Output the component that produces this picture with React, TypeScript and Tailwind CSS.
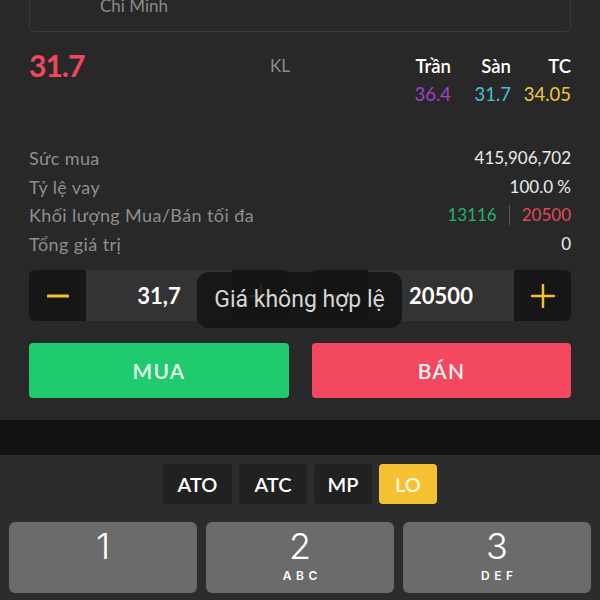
import React from 'react';

const rows = [
  { label: 'Sức mua', value: '415,906,702' },
  { label: 'Tỷ lệ vay', value: '100.0 %' },
  { label: 'Khối lượng Mua/Bán tối đa', value: null },
  { label: 'Tổng giá trị', value: '0' },
];

const Minus = () => (
  <svg width="22" height="6" viewBox="0 0 22 6">
    <line x1="1" y1="3" x2="21" y2="3" stroke="#f2c12e" strokeWidth="3" strokeLinecap="round" />
  </svg>
);

const Plus = () => (
  <svg width="24" height="24" viewBox="0 0 24 24">
    <line x1="1" y1="12" x2="23" y2="12" stroke="#f2c12e" strokeWidth="2.5" strokeLinecap="round" />
    <line x1="12" y1="1" x2="12" y2="23" stroke="#f2c12e" strokeWidth="2.5" strokeLinecap="round" />
  </svg>
);

const Stepper = ({ value }: { value: string }) => (
  <div className="flex w-[260px] rounded-[6px] overflow-hidden">
    <div className="w-[57px] bg-[#161616] flex items-center justify-center">
      <Minus />
    </div>
    <div className="flex-1 bg-[#333333] flex items-center justify-center text-[22px] font-bold text-white">
      {value}
    </div>
    <div className="w-[57px] bg-[#161616] flex items-center justify-center">
      <Plus />
    </div>
  </div>
);

const orderTypes = [
  { t: 'ATO', w: 'w-[69px]' },
  { t: 'ATC', w: 'w-[68px]' },
  { t: 'MP', w: 'w-[58px]' },
  { t: 'LO', w: 'w-[58px]' },
];

const keys = [
  { n: '1', sub: '' },
  { n: '2', sub: 'ABC' },
  { n: '3', sub: 'DEF' },
];

export default function App() {
  return (
    <div className="w-[600px] h-[600px] overflow-hidden bg-[#282828] flex flex-col font-['Lato','Noto_Sans',sans-serif]">
      <div className="px-[29px]">
        {/* top card (cut off) */}
        <div className="h-[32px] border border-t-0 border-[#3a3a3a] rounded-b-[6px] overflow-hidden">
          <div className="pl-[70px] -mt-[4px] text-[17px] leading-[20px] text-[#8a8a8a]">Chi Minh</div>
        </div>

        {/* price row */}
        <div className="flex items-start mt-[15px]">
          <div className="w-[241px] text-[30px] leading-[36px] font-bold text-[#f0485e] tracking-[-1px]">31.7</div>
          <div className="mt-[5px] text-[17px] leading-[28px] text-[#8b8b8b]">KL</div>
          <div className="ml-auto mt-[5px] grid grid-cols-[60px_60px_60px] text-right text-[18.5px] leading-[28px]">
            <span className="font-semibold text-white">Trần</span>
            <span className="font-semibold text-white">Sàn</span>
            <span className="font-semibold text-white">TC</span>
            <span className="text-[#a341cc]">36.4</span>
            <span className="text-[#3fc3d6]">31.7</span>
            <span className="text-[#f0c63a]">34.05</span>
          </div>
        </div>

        {/* info rows */}
        <div className="mt-[36px] flex flex-col text-[17px] leading-[28.5px]">
          {rows.map((r) => (
            <div key={r.label} className="flex justify-between">
              <span className="text-[#8f8f8f] text-[18px] tracking-[0.4px]">{r.label}</span>
              {r.value !== null ? (
                <span className="text-[#ececec]">{r.value}</span>
              ) : (
                <span className="flex items-center">
                  <span className="text-[#22b46c]">13116</span>
                  <span className="mx-[12px] w-px h-[20px] bg-[#5a5a5a]" />
                  <span className="text-[#e2475c]">20500</span>
                </span>
              )}
            </div>
          ))}
        </div>

        {/* steppers */}
        <div className="relative mt-[12px] h-[51px] flex justify-between">
          <Stepper value="31,7" />
          <Stepper value="20500" />
          <div className="absolute left-[168px] top-[2px] w-[205px] h-[56px] rounded-[12px] bg-[#141414]/90 flex items-center justify-center text-[23px] text-[#d6d6d6] font-['Roboto',sans-serif]">
            Giá không hợp lệ
          </div>
        </div>

        {/* buy / sell */}
        <div className="mt-[22px] flex justify-between">
          <button className="w-[260px] h-[55px] rounded-[4px] bg-[#1fcb6e] text-[21px] font-semibold tracking-[1.2px] text-[#eafff1]">
            MUA
          </button>
          <button className="w-[259px] h-[55px] rounded-[4px] bg-[#f34860] text-[21px] font-semibold tracking-[1.2px] text-[#fff0f2]">
            BÁN
          </button>
        </div>
      </div>

      <div className="mt-[22px] h-[35px] bg-[#121212]" />

      {/* keyboard */}
      <div className="flex-1 bg-[#2c2c2c]">
        <div className="pt-[9px] flex justify-center gap-[7px]">
          {orderTypes.map(({ t, w }) => (
            <div
              key={t}
              className={
                t === 'LO'
                  ? `${w} h-[40px] rounded-[4px] bg-[#f5c132] flex items-center justify-center text-[20px] font-semibold text-[#fff7e0]`
                  : `${w} h-[40px] rounded-[4px] bg-[#212121] flex items-center justify-center text-[20px] font-semibold text-white`
              }
            >
              {t}
            </div>
          ))}
        </div>
        <div className="mt-[18px] px-[9px] grid grid-cols-3 gap-[9px]">
          {keys.map((k) => (
            <div key={k.n} className="h-[71px] rounded-[6px] bg-[#6b6b6b] flex flex-col items-center pt-[6px] font-['Inter',sans-serif] text-white">
              <span className="text-[36px] leading-[36px] font-light">{k.n}</span>
              {k.sub && <span className="mt-[6px] text-[12px] leading-[11px] font-semibold tracking-[4.5px] pl-[4.5px]">{k.sub}</span>}
            </div>
          ))}
        </div>
      </div>
    </div>
  );
}
